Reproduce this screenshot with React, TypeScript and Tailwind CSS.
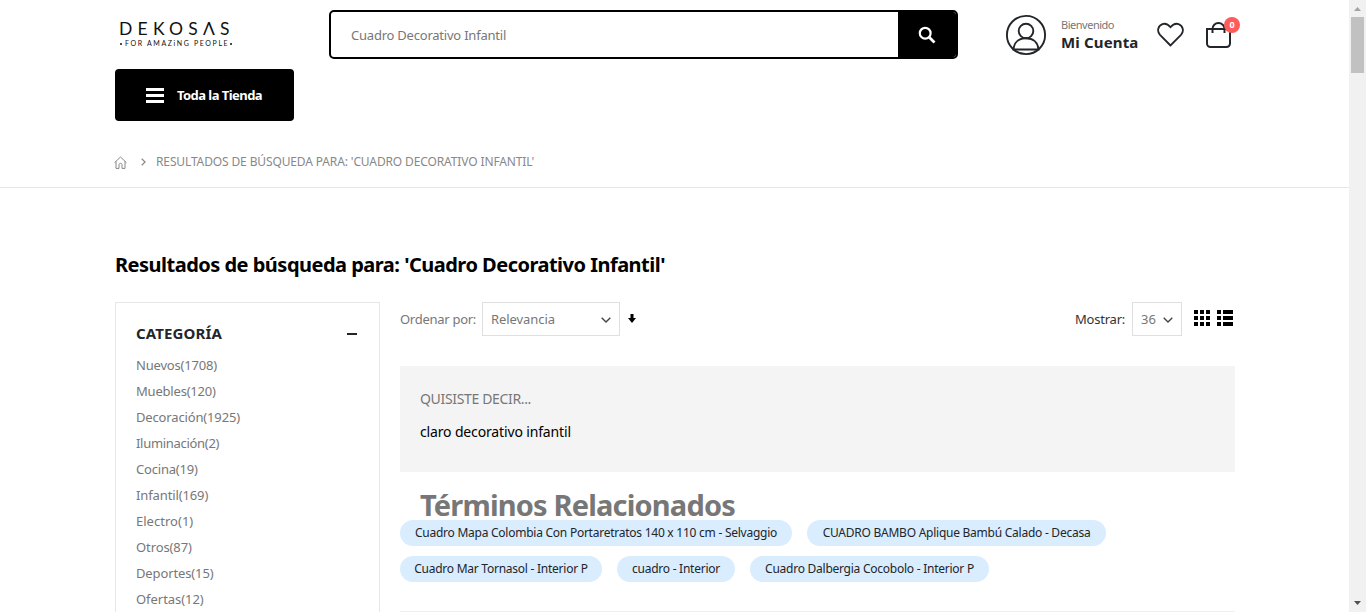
import type { ReactNode } from "react";

const categories = [
  ["Nuevos(1708)", "tracking-[-0.18px]"],
  ["Muebles(120)", "tracking-[-0.2px]"],
  ["Decoración(1925)", "tracking-[-0.15px]"],
  ["Iluminación(2)", "tracking-[-0.3px]"],
  ["Cocina(19)", "tracking-[-0.2px]"],
  ["Infantil(169)", "tracking-[-0.12px]"],
  ["Electro(1)", "tracking-[0.02px]"],
  ["Otros(87)", "tracking-[-0.1px]"],
  ["Deportes(15)", "tracking-[-0.12px]"],
  ["Ofertas(12)", "tracking-[-0.05px]"],
];

const relatedRows = [
  [
    ["Cuadro Mapa Colombia Con Portaretratos 140 x 110 cm - Selvaggio", "w-[392px]"],
    ["CUADRO BAMBO Aplique Bambú Calado - Decasa", "w-[299px]"],
  ],
  [
    ["Cuadro Mar Tornasol - Interior P", "w-[202px]"],
    ["cuadro - Interior", "w-[118px]"],
    ["Cuadro Dalbergia Cocobolo - Interior P", "w-[239px]"],
  ],
];

function Chevron() {
  return (
    <svg className="mt-px" width="10" height="6" viewBox="0 0 10 6" fill="none" stroke="#444" strokeWidth="1.4">
      <path d="M.7.7 5 5 9.3.7" />
    </svg>
  );
}

function SelectBox({ width, children }: { width: string; children: ReactNode }) {
  return (
    <button className={`flex h-[34px] items-center justify-between border border-[#dfdfdf] bg-white pt-px pr-2 pl-2 text-[#777] ${width}`}>
      {children}
      <Chevron />
    </button>
  );
}

function Header() {
  return (
    <header className="h-[188px] border-b border-[#e7e7e7] pr-[105px] pl-[115px]">
      <div className="flex h-[69px] items-start *:shrink-0">
        <div className="flex w-[214px] flex-col pt-[19px] pl-[4px] font-['Lato'] text-[#111]">
          <span className="h-[18px] text-[17.5px] leading-[19px] tracking-[5.25px] whitespace-nowrap">DEKOSΛS</span>
          <span className="mt-[2px] flex items-center text-[7px] leading-[9px] whitespace-nowrap">
            <i className="mr-[3px] ml-px h-[2px] w-[2px] rounded-full bg-[#111]" />
            <span className="tracking-[1.62px]">FOR AMAZiNG PEOPLE</span>
            <i className="ml-px h-[2px] w-[2px] rounded-full bg-[#111]" />
          </span>
        </div>
        <div className="mt-[10px] flex h-[49px] w-[629px] overflow-hidden rounded-[5px] border-2 border-black">
          <span className="flex flex-1 items-center pt-[2px] pl-5 text-[13px] tracking-[-0.22px] text-[#777]">Cuadro Decorativo Infantil</span>
          <span className="flex w-[58px] items-center justify-center bg-black">
            <svg width="18" height="18" viewBox="0 0 18 18" fill="none" stroke="#fff" strokeWidth="2.2">
              <circle cx="7.2" cy="7.2" r="5.4" />
              <path d="m11.2 11.2 5.3 5.3" strokeWidth="2.7" />
            </svg>
          </span>
        </div>
        <svg className="mt-[14px] ml-[47px]" width="42" height="42" viewBox="0 0 42 42" fill="none" stroke="#222529" strokeWidth="1.9">
          <circle cx="21" cy="21" r="19.1" />
          <circle cx="21" cy="17" r="7.3" />
          <path d="M8.5 35.5C9 28.2 14 24.3 21 24.3S33 28.2 33.5 35.5Z" />
        </svg>
        <div className="mt-[17px] ml-[14px] flex w-[96px] flex-col whitespace-nowrap">
          <span className="text-[11px] leading-[16px] tracking-[-0.48px] text-[#777]">Bienvenido</span>
          <span className="text-[15px] leading-[19px] font-bold tracking-[0.15px] text-[#222529]">Mi Cuenta</span>
        </div>
        <svg className="mt-[22px]" width="27" height="26" viewBox="0 0 27 26" fill="none" stroke="#222529" strokeWidth="1.8">
          <path d="M13.5 23.5 3 12.9C-.4 9.2 1 3.8 5.4 2.1 8.7 1 11.2 2.4 13.5 5.2 15.8 2.4 18.3 1 21.6 2.1 26 3.8 27.4 9.2 24 12.9Z" />
        </svg>
        <div className="relative mt-[20px] ml-[21px] h-7 w-[34px]">
          <svg width="28" height="29" viewBox="0 0 28 29" fill="none" stroke="#222529" strokeWidth="2">
            <path d="M2 9h23v14.5a3.5 3.5 0 0 1-3.5 3.5h-16A3.5 3.5 0 0 1 2 23.5ZM7.5 13V9a6 6 0 0 1 12 0v4" />
          </svg>
          <span className="absolute top-[-3px] left-[19px] flex h-4 w-4 items-center justify-center rounded-full bg-[#ff5b5b] text-[9px] font-bold text-white">0</span>
        </div>
      </div>
      <button className="flex h-[52px] w-[179px] items-center rounded-[4px] bg-black pt-px pl-[31px] text-[13px] font-bold tracking-[-0.55px] text-white">
        <svg className="mr-[13px]" width="18" height="15" viewBox="0 0 18 15" fill="#fff">
          <path d="M0 0h18v3H0zM0 6h18v3H0zM0 12h18v3H0z" />
        </svg>
        <span className="pt-px">Toda la Tienda</span>
      </button>
      <nav className="mt-[31px] flex h-5 items-center text-[12px] tracking-[-0.128px] text-[#888]">
        <svg className="mr-[14px] ml-[-1px]" width="13" height="13" viewBox="0 0 13 13" fill="none" stroke="#888" strokeWidth="1">
          <path d="m.5 6.7 6-5.7 6 5.7M2 5.4v7h3V8.8c0-2 3-2 3 0v3.6h3v-7" />
        </svg>
        <svg className="mr-[10px]" width="5" height="8" viewBox="0 0 5 8" fill="none" stroke="#888" strokeWidth="1.2">
          <path d="m.7.7 3.4 3.3L.7 7.3" />
        </svg>
        RESULTADOS DE BÚSQUEDA PARA: 'CUADRO DECORATIVO INFANTIL'
      </nav>
    </header>
  );
}

function Sidebar() {
  return (
    <aside className="h-[330px] w-[265px] shrink-0 border border-[#e7e7e7] px-5 pt-[19px]">
      <div className="flex h-[23px] items-center justify-between pr-[2px] text-[#222529]">
        <h3 className="text-[15px] font-bold tracking-[0.13px]">CATEGORÍA</h3>
        <span className="h-[2px] w-[10px] bg-[#222529]" />
      </div>
      <ul className="mt-[7px] text-[13px] leading-[26px] text-[#777]">
        {categories.map(([label, spacing]) => (
          <li key={label} className={spacing}>{label}</li>
        ))}
      </ul>
    </aside>
  );
}

function Toolbar() {
  return (
    <div className="flex h-[34px] items-center text-[13px] text-[#777]">
      <span className="w-[82px] pt-[2px] tracking-[-0.28px]">Ordenar por:</span>
      <SelectBox width="w-[138px]"><span className="pt-px tracking-[-0.07px]">Relevancia</span></SelectBox>
      <svg className="mb-[2px] ml-2" width="8" height="9" viewBox="0 0 8 9">
        <path d="M2.5 0h3v4H8L4 9 0 4h2.5z" />
      </svg>
      <span className="ml-auto w-[57px] pt-[2px] tracking-[-0.22px] text-[#333]">Mostrar:</span>
      <SelectBox width="w-[50px]"><span className="pt-px">36</span></SelectBox>
      <svg className="mb-[2px] ml-3" width="16" height="16" viewBox="0 0 16 16">
        <path d="M0 0h4v4H0zM6 0h4v4H6zM12 0h4v4h-4zM0 6h4v4H0zM6 6h4v4H6zM12 6h4v4h-4zM0 12h4v4H0zM6 12h4v4H6zM12 12h4v4h-4z" />
      </svg>
      <svg className="mr-[2px] mb-[2px] ml-[7px]" width="16" height="16" viewBox="0 0 16 16">
        <path d="M0 0h4v4H0zM6 0h10v4H6zM0 6h4v4H0zM6 6h10v4H6zM0 12h4v4H0zM6 12h10v4H6z" />
      </svg>
    </div>
  );
}

export default function App() {
  return (
    <div className="flex h-[612px] w-[1366px] overflow-hidden bg-white font-['Noto_Sans',sans-serif]">
      <div className="h-[612px] w-[1349px] overflow-hidden">
        <Header />
        <main className="pr-[114px] pl-[115px]">
          <h1 className="pt-[62px] text-[20px] leading-[30px] font-bold tracking-[-0.51px] text-black">
            Resultados de búsqueda para: 'Cuadro Decorativo Infantil'
          </h1>
          <div className="mt-[22px] flex gap-5">
            <Sidebar />
            <section className="flex-1">
              <Toolbar />
              <div className="mt-[30px] h-[106px] bg-[#f4f4f4] px-5 pt-[22px] text-[14px] leading-[22px]">
                <p className="tracking-[-0.34px] text-[#777]">QUISISTE DECIR...</p>
                <p className="mt-[11px] tracking-[-0.15px] text-black">claro decorativo infantil</p>
              </div>
              <h2 className="mt-[14px] h-[34px] pl-5 text-[29px] leading-[38px] font-bold tracking-[-0.83px] text-[#777]">Términos Relacionados</h2>
              <div className="flex flex-col gap-[10px]">
                {relatedRows.map((row, index) => (
                  <div key={index} className="flex gap-[15px]">
                    {row.map(([label, width]) => (
                      <span key={label} className={`flex h-[26px] items-center justify-center rounded-full bg-[#d9edff] text-[12px] tracking-[-0.25px] whitespace-nowrap text-[#222529] ${width}`}>{label}</span>
                    ))}
                  </div>
                ))}
              </div>
              <div className="mt-[29px] border-t border-[#efefef]" />
            </section>
          </div>
        </main>
      </div>
      <div className="flex w-[17px] flex-col items-center justify-between bg-[#f1f1f1] py-[7px]">
        <div className="flex flex-col items-center">
          <svg width="7" height="4" viewBox="0 0 7 4" fill="#a3a3a3"><path d="M3.5 0 7 4H0z" /></svg>
          <span className="mt-[6px] h-14 w-[13px] bg-[#c1c1c1]" />
        </div>
        <svg width="7" height="4" viewBox="0 0 7 4" fill="#505050"><path d="M0 0h7L3.5 4z" /></svg>
      </div>
    </div>
  );
}
